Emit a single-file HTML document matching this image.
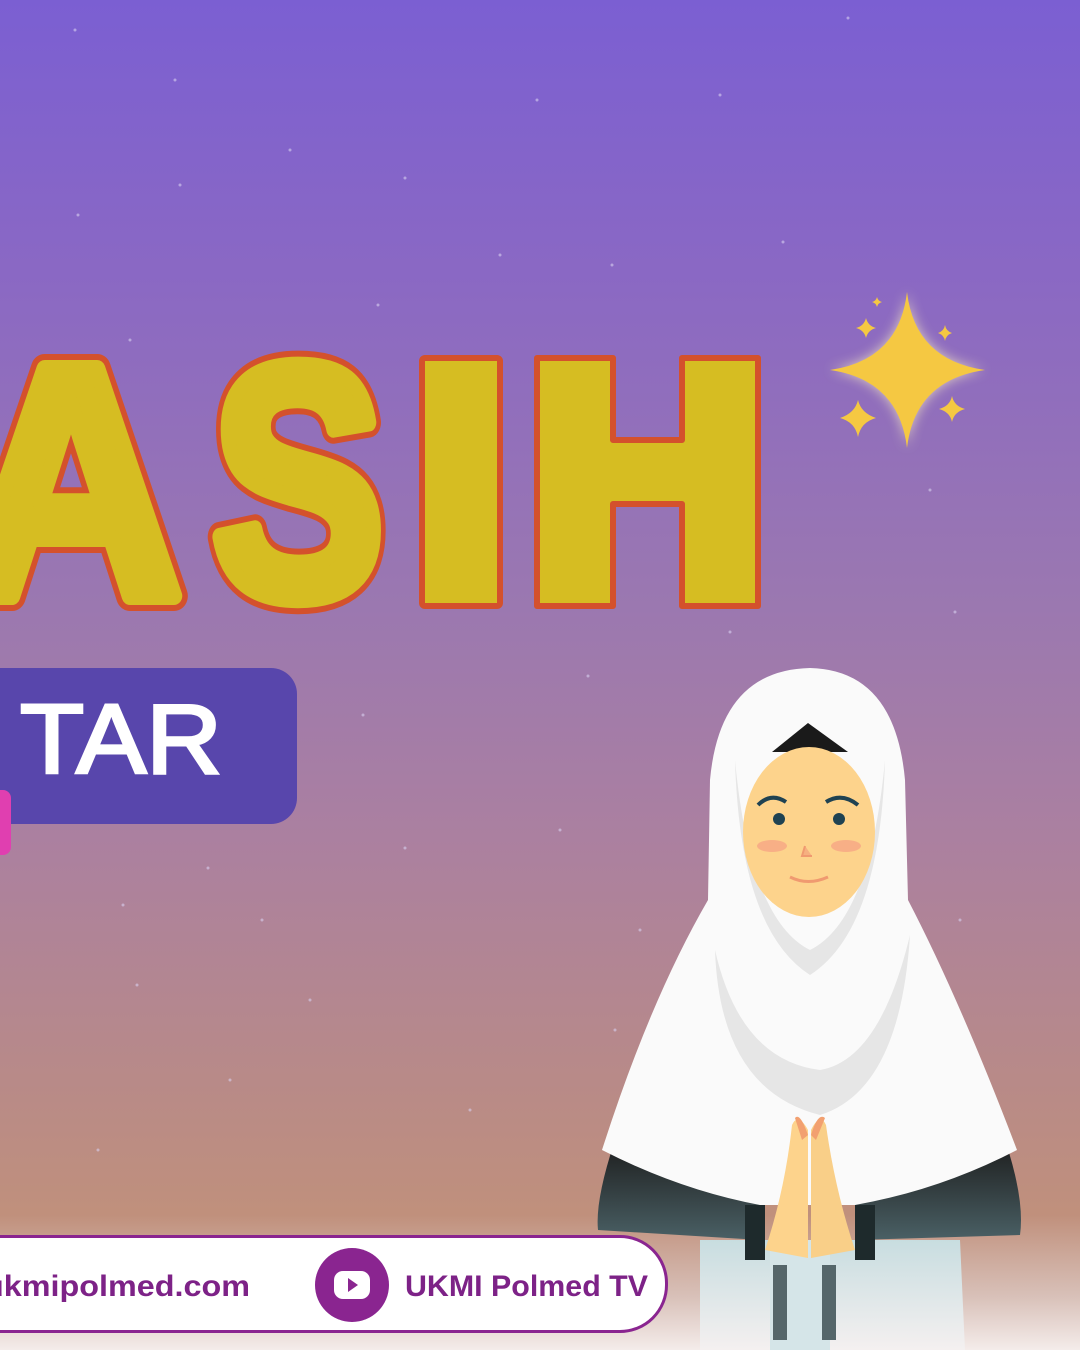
<!DOCTYPE html>
<html><head><meta charset="utf-8"><style>
html,body{margin:0;padding:0}
body{width:1080px;height:1350px;overflow:hidden;position:relative;font-family:"Liberation Sans",sans-serif;
background:linear-gradient(180deg,#7b5fd2 0%,#8a68c4 20%,#9b78b0 45%,#ab80a0 62%,#b88a88 80%,#c0907c 90%,#d8c0b8 96%,#f4ecea 100%);}
.pill{position:absolute;left:-60px;top:1235px;width:722px;height:92px;border:3px solid #8a2590;border-radius:48px;background:#fff;}
</style></head><body>
<svg width="1080" height="1350" style="position:absolute;left:0;top:0">
<g fill="#d8d0f0" opacity=".6">
<circle cx="75" cy="30" r="1.5"/><circle cx="175" cy="80" r="1.5"/><circle cx="290" cy="150" r="1.5"/><circle cx="405" cy="178" r="1.5"/><circle cx="537" cy="100" r="1.5"/><circle cx="720" cy="95" r="1.5"/><circle cx="848" cy="18" r="1.5"/><circle cx="78" cy="215" r="1.5"/><circle cx="180" cy="185" r="1.5"/><circle cx="500" cy="255" r="1.5"/><circle cx="612" cy="265" r="1.5"/><circle cx="783" cy="242" r="1.5"/><circle cx="130" cy="340" r="1.5"/><circle cx="378" cy="305" r="1.5"/><circle cx="930" cy="490" r="1.5"/><circle cx="955" cy="612" r="1.5"/><circle cx="363" cy="715" r="1.5"/><circle cx="588" cy="676" r="1.5"/><circle cx="560" cy="830" r="1.5"/><circle cx="405" cy="848" r="1.5"/><circle cx="208" cy="868" r="1.5"/><circle cx="123" cy="905" r="1.5"/><circle cx="262" cy="920" r="1.5"/><circle cx="310" cy="1000" r="1.5"/><circle cx="137" cy="985" r="1.5"/><circle cx="230" cy="1080" r="1.5"/><circle cx="98" cy="1150" r="1.5"/><circle cx="470" cy="1110" r="1.5"/><circle cx="615" cy="1030" r="1.5"/><circle cx="960" cy="920" r="1.5"/><circle cx="640" cy="930" r="1.5"/><circle cx="730" cy="632" r="1.5"/>
</g>
<defs><filter id="gl" x="-50%" y="-50%" width="200%" height="200%"><feGaussianBlur stdDeviation="6"/></filter></defs>
<path d="M907 292 Q915 360 985 370 Q915 380 907 448 Q899 380 830 370 Q899 360 907 292Z" fill="#fff6c0" filter="url(#gl)" opacity=".7"/>
<path d="M907 292 Q915 360 985 370 Q915 380 907 448 Q899 380 830 370 Q899 360 907 292Z" fill="#f5c842"/>
<g fill="#f5c842">
<path d="M858 400 Q861 413 876 418 Q861 422 858 437 Q855 422 840 418 Q855 413 858 400Z"/>
<path d="M952 396 Q954 406 965 409 Q954 412 952 422 Q950 412 939 409 Q950 406 952 396Z"/>
<path d="M866 318 Q868 326 876 328 Q868 330 866 338 Q864 330 856 328 Q864 326 866 318Z"/>
<path d="M945 325 Q946 331 952 333 Q946 335 945 341 Q944 335 938 333 Q944 331 945 325Z"/>
<path d="M877 297 Q878 301 882 302 Q878 303 877 307 Q876 303 872 302 Q876 301 877 297Z"/>
</g>
<!-- ASIH -->
<g font-family="Liberation Sans,sans-serif" font-weight="bold" font-size="330" stroke-linejoin="round">
<g fill="#d4512c" stroke="#d4512c" stroke-width="30">
<text x="-40" y="596" textLength="222" lengthAdjust="spacingAndGlyphs">A</text>
<text x="212" y="596" textLength="172" lengthAdjust="spacingAndGlyphs">S</text>
</g>
<g fill="#d6bd22" stroke="#d6bd22" stroke-width="18">
<text x="-40" y="596" textLength="222" lengthAdjust="spacingAndGlyphs">A</text>
<text x="212" y="596" textLength="172" lengthAdjust="spacingAndGlyphs">S</text>
</g>
<g fill="#d6bd22" stroke="#d4512c" stroke-width="6">
<rect x="422" y="358" width="78" height="248" rx="3"/>
<path d="M537 358h76v82h69v-82h76v248h-76v-102h-69v102h-76z"/>
</g>
</g>
<rect x="-40" y="668" width="337" height="156" rx="26" fill="#5846ac"/>
<rect x="-20" y="790" width="31" height="65" rx="8" fill="#e03fb0"/>
<text x="20" y="773" font-family="Liberation Sans,sans-serif" font-size="98" fill="#fff" stroke="#fff" stroke-width="3" textLength="202" lengthAdjust="spacingAndGlyphs">TAR</text>
<defs><linearGradient id="arm" x1="0" y1="0" x2="0" y2="1"><stop offset="0" stop-color="#1c1c1c"/><stop offset="1" stop-color="#4a6065"/></linearGradient>
<linearGradient id="fade" x1="0" y1="0" x2="0" y2="1"><stop offset="0" stop-color="#c8dde0"/><stop offset="1" stop-color="#f4f0f0"/></linearGradient></defs>
<path d="M700 1240 L770 1240 L775 1350 L700 1350Z M830 1240 L960 1240 L965 1350 L830 1350Z" fill="url(#fade)"/>
<rect x="770" y="1240" width="60" height="110" fill="#d5e5e8"/>
<rect x="773" y="1265" width="14" height="75" fill="#55666a"/><rect x="822" y="1265" width="14" height="75" fill="#55666a"/>
<path d="M615 1140 Q595 1200 598 1230 L760 1240 L760 1205 Z" fill="url(#arm)"/>
<path d="M1005 1140 Q1025 1200 1020 1235 L855 1240 L855 1205 Z" fill="url(#arm)"/>
<path d="M810 668 Q720 670 710 780 L708 900 Q650 1000 602 1150 Q680 1190 760 1205 L855 1205 Q940 1190 1017 1150 Q960 1000 908 900 L905 780 Q895 670 810 668Z" fill="#fafafa"/>
<path d="M735 760 Q740 930 810 975 Q880 930 885 760 Q870 920 810 950 Q750 920 735 760Z" fill="#e6e6e6"/>
<path d="M715 950 Q720 1090 820 1115 Q900 1090 910 935 Q880 1060 820 1070 Q740 1060 715 950Z" fill="#e6e6e6"/>
<path d="M772 752 L808 723 L848 752Z" fill="#1a1a1a"/>
<ellipse cx="809" cy="832" rx="66" ry="85" fill="#fdd38c"/>
<path d="M758 805 Q771 792 786 802" stroke="#1f4252" stroke-width="4" fill="none"/>
<path d="M826 802 Q842 792 858 805" stroke="#1f4252" stroke-width="4" fill="none"/>
<circle cx="779" cy="819" r="6" fill="#1f4252"/><circle cx="839" cy="819" r="6" fill="#1f4252"/>
<ellipse cx="772" cy="846" rx="15" ry="6" fill="#f6a685" opacity=".8"/><ellipse cx="846" cy="846" rx="15" ry="6" fill="#f6a685" opacity=".8"/>
<path d="M805 846 L802 856 L812 856" stroke="#f09a70" stroke-width="2" fill="#f6b080"/>
<path d="M790 877 Q808 886 828 877" stroke="#f09a70" stroke-width="3" fill="none"/>
<rect x="745" y="1205" width="20" height="55" fill="#1e2a2c"/><rect x="855" y="1205" width="20" height="55" fill="#1e2a2c"/>
<path d="M808 1130 Q798 1112 792 1125 Q785 1190 765 1250 L808 1258Z" fill="#fdd38c"/>
<path d="M811 1130 Q820 1112 826 1125 Q835 1190 855 1250 L811 1258Z" fill="#f9cf88"/>
<path d="M795 1118 Q800 1112 808 1135 L802 1140Z M825 1118 Q818 1112 811 1135 L816 1140Z" fill="#f2a070"/>
</svg>
<div class="pill"></div>
<svg width="1080" height="1350" style="position:absolute;left:0;top:0">
<circle cx="352" cy="1285" r="37" fill="#8a2590"/>
<rect x="334" y="1271" width="36" height="28" rx="9" fill="#fff"/>
<path d="M348 1278 L358 1285 L348 1292Z" fill="#8a2590"/>
<g font-family="Liberation Sans,sans-serif" font-weight="bold" font-size="30" fill="#7d2287">
<text x="-16" y="1296" textLength="266" lengthAdjust="spacingAndGlyphs">ukmipolmed.com</text>
<text x="405" y="1296" textLength="243" lengthAdjust="spacingAndGlyphs">UKMI Polmed TV</text>
</g>
</svg>
</body></html>
